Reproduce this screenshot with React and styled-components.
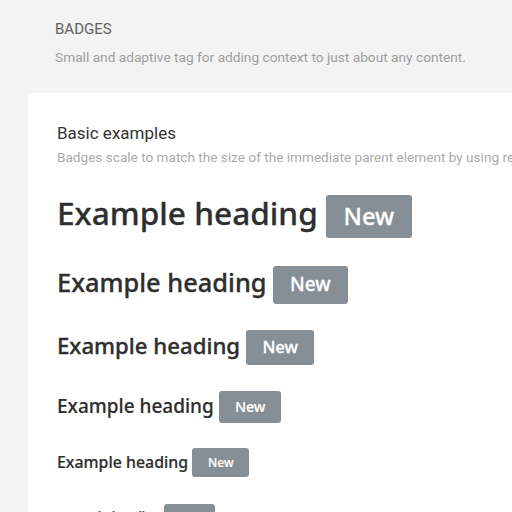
import React from "react";
import styled, { createGlobalStyle } from "styled-components";

const GlobalStyle = createGlobalStyle`
  html, body {
    margin: 0;
    padding: 0;
    background: #f3f3f3;
    font-family: Roboto, "Liberation Sans", sans-serif;
    overflow: hidden;
  }
`;

const Page = styled.div`
  padding: 19px 0 0 28px;
  width: 600px;
`;

const PageHeader = styled.div`
  padding: 0 0 0 27px;
  margin-bottom: 26px;

  h2 {
    margin: 0 0 8px;
    font-size: 15px;
    font-weight: 400;
    color: #616161;
    line-height: 20px;
  }

  p {
    margin: 0;
    font-size: 13.7px;
    color: #9e9e9e;
    line-height: 20px;
  }
`;

const Card = styled.div`
  background: #fff;
  padding: 31px 29px 0;
  min-height: 500px;
`;

const CardTitle = styled.h4`
  margin: 0 0 6px;
  font-size: 17px;
  font-weight: 400;
  color: #333;
  line-height: 18px;
`;

const CardText = styled.p`
  margin: 0 0 28px;
  font-size: 13.6px;
  color: #aaa;
  white-space: nowrap;
  line-height: 18px;
`;

const Heading = styled.div`
  font-family: "Noto Sans", Roboto, sans-serif;
  font-size: ${(p) => p.size}px;
  font-weight: 500;
  -webkit-text-stroke: ${(p) => (p.size > 20 ? 0.3 : 0.2)}px currentColor;
  line-height: 1.2;
  color: #2e2e2e;
  margin: 0 0 ${(p) => p.gap}px;
  white-space: nowrap;
`;

const Badge = styled.span`
  display: inline-block;
  padding: 7.5px calc(0.15em + 14px);
  font-size: 75%;
  font-weight: 500;
  line-height: 1.2;
  color: #fff;
  background: #868e96;
  border-radius: 3px;
  vertical-align: baseline;
`;

const headings = [
  { size: 31.6, gap: 28 },
  { size: 25.4, gap: 26 },
  { size: 22.2, gap: 26 },
  { size: 19, gap: 25 },
  { size: 15.9, gap: 27 },
  { size: 12.6, gap: 25 },
];

export default function App() {
  return (
    <>
      <GlobalStyle />
      <Page>
        <PageHeader>
          <h2>BADGES</h2>
          <p>Small and adaptive tag for adding context to just about any content.</p>
        </PageHeader>
        <Card>
          <CardTitle>Basic examples</CardTitle>
          <CardText>
            Badges scale to match the size of the immediate parent element by using relative font sizing and em units.
          </CardText>
          {headings.map((h) => (
            <Heading key={h.size} size={h.size} gap={h.gap}>
              Example heading <Badge>New</Badge>
            </Heading>
          ))}
        </Card>
      </Page>
    </>
  );
}
